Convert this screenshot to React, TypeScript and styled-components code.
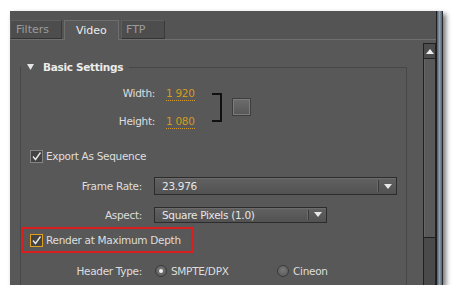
import React from 'react';
import styled, { createGlobalStyle } from 'styled-components';

const GlobalStyle = createGlobalStyle`
  html, body {
    margin: 0;
    padding: 0;
    background: #ffffff;
  }
  body {
    font-family: "DejaVu Sans", Verdana, sans-serif;
    font-size: 10.5px;
    letter-spacing: -0.3px;
    color: #dedede;
  }
`;

const Page = styled.div`
  padding: 11px 0 0 10px;
`;

const Window = styled.div`
  display: flex;
  width: 433px;
  height: 274px;
  box-shadow: 3px 3px 5px rgba(0, 0, 0, 0.55);
`;

const Main = styled.div`
  flex: 1;
  min-width: 0;
  display: flex;
  flex-direction: column;
  background: #585858;
`;

const FrameStrip = styled.div`
  width: 5px;
  border-left: 1px solid #1f1f1f;
  border-right: 1px solid #2a2a2a;
  background: linear-gradient(to right, #4a5866, #8f9fb0 50%, #56636f);
`;

const TabBar = styled.div`
  height: 28px;
  display: flex;
  align-items: flex-end;
  gap: 2px;
  background: #545454;
  border-bottom: 1px solid #6e6e6e;
`;

const Tab = styled.div<{ $active?: boolean; $w: number; $pad: number }>`
  box-sizing: border-box;
  width: ${(p) => p.$w}px;
  height: ${(p) => (p.$active ? 20 : 19)}px;
  margin-bottom: ${(p) => (p.$active ? -1 : 0)}px;
  padding-left: ${(p) => p.$pad}px;
  display: flex;
  align-items: center;
  font-size: 11px;
  letter-spacing: 0;
  color: ${(p) => (p.$active ? '#ececec' : '#9c9c9c')};
  background: ${(p) => (p.$active ? '#585858' : '#4d4d4d')};
  border: 1px solid ${(p) => (p.$active ? '#6e6e6e' : '#5e5e5e')};
  border-bottom: ${(p) => (p.$active ? 'none' : '1px solid #333333')};
  border-right-color: ${(p) => (p.$active ? '#6e6e6e' : '#3a3a3a')};
`;

const Body = styled.div`
  flex: 1;
  min-height: 0;
  display: flex;
`;

const Content = styled.div`
  flex: 1;
  min-width: 0;
  padding: 20px 16px 0 10px;
  overflow: hidden;
`;

const Group = styled.fieldset`
  margin: 0;
  padding: 9px 0 20px 0;
  min-width: 0;
  border: 1px solid #474747;
`;

const Legend = styled.legend`
  padding: 0 6px;
  margin: 0;
  line-height: 14px;
  font-weight: bold;
  font-size: 10.5px;
  letter-spacing: -0.3px;
  color: #ececec;
`;

const Caret = styled.svg`
  width: 7px;
  height: 6px;
  margin-right: 9px;
  vertical-align: 1px;
`;

const DimsBlock = styled.div`
  display: flex;
  align-items: center;
`;

const DimsColumn = styled.div`
  display: flex;
  flex-direction: column;
  gap: 8px;
`;

const DimRow = styled.div`
  height: 20px;
  display: flex;
  align-items: center;
`;

const Label = styled.div<{ $w: number }>`
  width: ${(p) => p.$w}px;
  text-align: right;
  flex-shrink: 0;
  white-space: nowrap;
`;

const Value = styled.span`
  margin-left: 11px;
  width: 46px;
  color: #d69a1f;
`;

const Underlined = styled.span`
  border-bottom: 1px dotted #d69a1f;
  padding-bottom: 1px;
`;

const Bracket = styled.div`
  width: 8px;
  height: 25px;
  border: 2px solid #111111;
  border-left: none;
`;

const ChainButton = styled.div`
  box-sizing: border-box;
  width: 19px;
  height: 18px;
  margin-left: 10px;
  border: 1px solid #3e3e3e;
  box-shadow: inset 0 0 0 1px #7c7c7c;
  background: linear-gradient(#6c6c6c, #575757);
`;

const Row = styled.div<{ $h: number; $mt: number; $indent?: number }>`
  height: ${(p) => p.$h}px;
  margin-top: ${(p) => p.$mt}px;
  padding-left: ${(p) => p.$indent ?? 0}px;
  display: flex;
  align-items: center;
`;

const Highlight = styled.div`
  box-sizing: border-box;
  width: 171px;
  height: 26px;
  margin: 4px 0 0 1px;
  padding-left: 6px;
  border: 2px solid #d81e1e;
  display: flex;
  align-items: center;
`;

const CheckBox = styled.div<{ $focus?: boolean }>`
  box-sizing: border-box;
  width: 13px;
  height: 13px;
  flex-shrink: 0;
  border: 1px solid ${(p) => (p.$focus ? '#e3a01c' : '#858585')};
  background: #434343;
  display: flex;
  align-items: center;
  justify-content: center;
`;

const CheckText = styled.span`
  margin-left: 3px;
  white-space: nowrap;
`;

const Select = styled.div<{ $w: number; $h: number }>`
  box-sizing: border-box;
  width: ${(p) => p.$w}px;
  height: ${(p) => p.$h}px;
  margin-left: 12px;
  display: flex;
  align-items: center;
  border: 1px solid #2c2c2c;
  background: linear-gradient(#616161, #525252);
  box-shadow: inset 0 1px 0 #6c6c6c;
  color: #e6e6e6;
`;

const SelectText = styled.span`
  flex: 1;
  padding-left: 7px;
  white-space: nowrap;
`;

const SelectArrow = styled.div`
  box-sizing: border-box;
  width: 18px;
  height: 70%;
  display: flex;
  align-items: center;
  justify-content: center;
  border-left: 1px solid #3a3a3a;
  box-shadow: -1px 0 0 #6a6a6a;
`;

const RadioOption = styled.div<{ $w?: number }>`
  width: ${(p) => (p.$w ? `${p.$w}px` : 'auto')};
  margin-left: 13px;
  display: flex;
  align-items: center;
  white-space: nowrap;
  & + & {
    margin-left: 0;
  }
`;

const Radio = styled.div<{ $on?: boolean }>`
  box-sizing: border-box;
  width: 12px;
  height: 12px;
  border-radius: 50%;
  border: 1px solid #3a3a3a;
  background: radial-gradient(circle at 50% 40%, #7a7a7a, #555555);
  margin-right: 4px;
  display: flex;
  align-items: center;
  justify-content: center;
  &::after {
    content: '';
    display: ${(p) => (p.$on ? 'block' : 'none')};
    width: 4px;
    height: 4px;
    border-radius: 50%;
    background: #eeeeee;
  }
`;

const ScrollBar = styled.div`
  width: 11px;
  margin-top: 3px;
  border-left: 1px solid #222222;
  border-right: 1px solid #222222;
  background: #4a4a4a;
  display: flex;
  flex-direction: column;
`;

const ScrollButton = styled.div`
  height: 14px;
  border-top: 1px solid #222222;
  border-bottom: 1px solid #222222;
  background: #4c4c4c;
  display: flex;
  align-items: center;
  justify-content: center;
`;

const ScrollThumb = styled.div`
  height: 178px;
  border-bottom: 1px solid #1e1e1e;
  background: #595959;
  box-shadow: inset 1px 0 0 #656565;
`;

const Check = () => (
  <svg width="11" height="11" viewBox="0 0 11 11">
    <path d="M2 5.5 L4.5 8.5 L9.5 1.5" fill="none" stroke="#e6e6e6" strokeWidth="1.4" />
  </svg>
);

const DownArrow = () => (
  <svg width="8" height="5" viewBox="0 0 8 5">
    <path d="M0 0 H8 L4 5 Z" fill="#e8e8e8" />
  </svg>
);

const App: React.FC = () => {
  return (
    <>
      <GlobalStyle />
      <Page>
        <Window>
          <Main>
            <TabBar>
              <Tab $w={52} $pad={5}>Filters</Tab>
              <Tab $active $w={55} $pad={11}>Video</Tab>
              <Tab $w={44} $pad={4}>FTP</Tab>
            </TabBar>
            <Body>
              <Content>
                <Group>
                  <Legend>
                    <Caret viewBox="0 0 7 6">
                      <path d="M0 0 H7 L3.5 6 Z" fill="#e6e6e6" />
                    </Caret>
                    Basic Settings
                  </Legend>

                  <DimsBlock>
                    <DimsColumn>
                      <DimRow>
                        <Label $w={134}>Width:</Label>
                        <Value><Underlined>1 920</Underlined></Value>
                      </DimRow>
                      <DimRow>
                        <Label $w={134}>Height:</Label>
                        <Value><Underlined>1 080</Underlined></Value>
                      </DimRow>
                    </DimsColumn>
                    <Bracket />
                    <ChainButton />
                  </DimsBlock>

                  <Row $h={16} $mt={17} $indent={9}>
                    <CheckBox><Check /></CheckBox>
                    <CheckText>Export As Sequence</CheckText>
                  </Row>

                  <Row $h={18} $mt={13}>
                    <Label $w={121}>Frame Rate:</Label>
                    <Select $w={243} $h={18}>
                      <SelectText>23.976</SelectText>
                      <SelectArrow><DownArrow /></SelectArrow>
                    </Select>
                  </Row>

                  <Row $h={16} $mt={12}>
                    <Label $w={121}>Aspect:</Label>
                    <Select $w={173} $h={16}>
                      <SelectText>Square Pixels (1.0)</SelectText>
                      <SelectArrow><DownArrow /></SelectArrow>
                    </Select>
                  </Row>

                  <Highlight>
                    <CheckBox $focus><Check /></CheckBox>
                    <CheckText>Render at Maximum Depth</CheckText>
                  </Highlight>

                  <Row $h={16} $mt={10}>
                    <Label $w={121}>Header Type:</Label>
                    <RadioOption $w={122}>
                      <Radio $on />
                      SMPTE/DPX
                    </RadioOption>
                    <RadioOption>
                      <Radio />
                      Cineon
                    </RadioOption>
                  </Row>
                </Group>
              </Content>
              <ScrollBar>
                <ScrollButton>
                  <svg width="8" height="5" viewBox="0 0 8 5">
                    <path d="M0 5 H8 L4 0 Z" fill="#eeeeee" />
                  </svg>
                </ScrollButton>
                <ScrollThumb />
              </ScrollBar>
            </Body>
          </Main>
          <FrameStrip />
        </Window>
      </Page>
    </>
  );
};

export default App;
